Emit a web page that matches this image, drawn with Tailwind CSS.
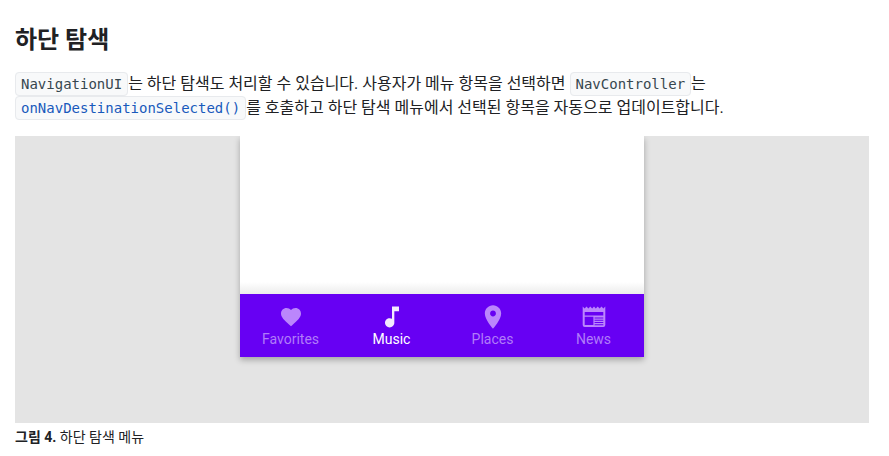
<!DOCTYPE html>
<html lang="ko">
<head>
<meta charset="utf-8">
<meta name="viewport" content="width=device-width, initial-scale=1">
<title>하단 탐색</title>
<script src="https://cdn.jsdelivr.net/npm/@tailwindcss/browser@4"></script>
</head>
<body class="bg-white font-[Roboto,'Noto_Sans_CJK_KR',sans-serif] text-[#202124]">
<main class="pt-6 pr-5 pl-[15px]">
  <h2 class="text-2xl leading-8 font-bold">하단 탐색</h2>
  <p class="mt-4 text-base leading-6 break-keep"><code class="rounded border border-[#e8eaed] bg-[#f8f9fa] px-[5px] py-[3px] font-['DejaVu_Sans_Mono',monospace] text-sm leading-4 text-[#37474f]">NavigationUI</code>는 하단 탐색도 처리할 수 있습니다. 사용자가 메뉴 항목을 선택하면 <code class="rounded border border-[#e8eaed] bg-[#f8f9fa] px-[5px] py-[3px] font-['DejaVu_Sans_Mono',monospace] text-sm leading-4 text-[#37474f]">NavController</code>는 <a href="#"><code class="rounded border border-[#e8eaed] bg-[#f8f9fa] px-[5px] py-[3px] font-['DejaVu_Sans_Mono',monospace] text-sm leading-4 text-[#185abc]">onNavDestinationSelected()</code></a>를 호출하고 하단 탐색 메뉴에서 선택된 항목을 자동으로 업데이트합니다.</p>
  <figure class="mt-4">
    <div class="overflow-hidden bg-[#e4e4e4] pb-[66px]">
      <div class="mx-auto max-w-[404px] bg-white shadow-[0_3px_6px_rgba(0,0,0,0.28)]">
        <div class="flex h-[158px] flex-col justify-end">
          <div class="h-3 bg-linear-to-b from-white to-[#ececec]"></div>
        </div>
        <nav class="grid h-[63px] grid-cols-4 bg-[#6700f3] text-sm leading-4 text-[#b07cf9]">
          <a href="#" class="flex flex-col items-center pt-[9px]">
            <svg class="h-7 w-7 text-[#bb86fc]" viewBox="-2 -2 28 28" fill="currentColor" aria-hidden="true"><path d="M12 21.35l-1.45-1.32C5.4 15.36 2 12.28 2 8.5 2 5.42 4.42 3 7.5 3c1.74 0 3.41.81 4.5 2.09C13.09 3.81 14.76 3 16.5 3 19.58 3 22 5.42 22 8.5c0 3.78-3.4 6.86-8.55 11.54L12 21.35z"/></svg>
            Favorites
          </a>
          <a href="#" class="flex flex-col items-center pt-[9px] text-white" aria-current="page">
            <svg class="h-7 w-7 text-[#f3eafe]" viewBox="0 0 24 24" fill="currentColor" aria-hidden="true"><path d="M12 3v10.55c-.59-.34-1.27-.55-2-.55-2.21 0-4 1.79-4 4s1.79 4 4 4 4-1.79 4-4V7h4V3h-6z"/></svg>
            Music
          </a>
          <a href="#" class="flex flex-col items-center pt-[9px]">
            <svg class="h-7 w-7 text-[#bb86fc]" viewBox="0 0 24 24" fill="currentColor" aria-hidden="true"><path d="M12 2C8.13 2 5 5.13 5 9c0 5.25 7 13 7 13s7-7.75 7-13c0-3.87-3.13-7-7-7zm0 9.5c-1.38 0-2.5-1.12-2.5-2.5s1.12-2.5 2.5-2.5 2.5 1.12 2.5 2.5-1.12 2.5-2.5 2.5z"/></svg>
            Places
          </a>
          <a href="#" class="flex flex-col items-center pt-[9px]">
            <svg class="h-7 w-7 text-[#bb86fc]" viewBox="0 0 28 28" fill="currentColor" aria-hidden="true"><path fill-rule="evenodd" d="M2.7 3.4L4.6 5.6 6.5 3.4 8.4 5.6 10.3 3.4 12.2 5.6 14 3.4 15.8 5.6 17.7 3.4 19.6 5.6 21.5 3.4 23.4 5.6 25.3 3.4V22a2 2 0 0 1-2 2H4.7a2 2 0 0 1-2-2zM4.7 9v3.4h18.6V9zM4.7 13.8v8.2h8.7v-8.2zM14.6 14.6v1h8.7v-1zM14.6 16.8v1h8.7v-1zM14.6 19v1h8.7v-1zM14.6 21.2v1h8.7v-1z"/></svg>
            News
          </a>
        </nav>
      </div>
    </div>
    <figcaption class="mt-1 text-sm leading-5"><b>그림 4.</b> 하단 탐색 메뉴</figcaption>
  </figure>
</main>
</body>
</html>
